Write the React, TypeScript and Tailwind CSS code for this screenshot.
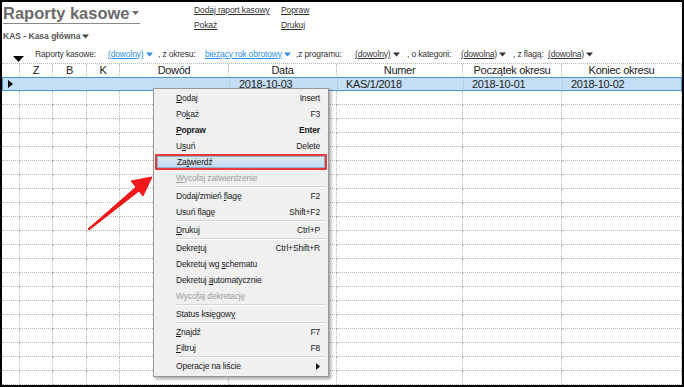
import React from "react"

const cols = [18, 33, 34, 33, 109, 108, 126, 99, 120]
const colTpl = "grid grid-cols-[18px_33px_34px_33px_109px_108px_126px_99px_120px]"

function Tri({ className = "" }: { className?: string }) {
  return (
    <svg width="7" height="5" viewBox="0 0 7 5" className={`inline-block ml-[2px] ${className}`}>
      <path d="M0 0.5 L7 0.5 L3.5 4.5 Z" fill="currentColor" />
    </svg>
  )
}

type Item = {
  label: React.ReactNode
  key?: string
  bold?: boolean
  disabled?: boolean
  active?: boolean
  sub?: boolean
}

const u = (s: string) => <span className="underline underline-offset-[1px]">{s}</span>

const menu: (Item | "sep")[] = [
  { label: <>{u("D")}odaj</>, key: "Insert" },
  { label: <>Po{u("k")}aż</>, key: "F3" },
  { label: <>{u("P")}opraw</>, key: "Enter", bold: true },
  { label: <>U{u("s")}uń</>, key: "Delete" },
  { label: <>Za{u("t")}wierdź</>, active: true },
  { label: <>{u("W")}ycofaj zatwierdzenie</>, disabled: true },
  "sep",
  { label: <>Dodaj/zmień {u("f")}lagę</>, key: "F2" },
  { label: <>Usuń fla{u("g")}ę</>, key: "Shift+F2" },
  "sep",
  { label: <>{u("D")}rukuj</>, key: "Ctrl+P" },
  "sep",
  { label: <>Dekre{u("t")}uj</>, key: "Ctrl+Shift+R" },
  { label: <>Dekretuj wg {u("s")}chematu</> },
  { label: <>Dekretuj {u("a")}utomatycznie</> },
  { label: <>Wyco{u("f")}aj dekretację</>, disabled: true },
  "sep",
  { label: <>Status księgow{u("y")}</> },
  "sep",
  { label: <>{u("Z")}najdź</>, key: "F7" },
  { label: <>{u("F")}iltruj</>, key: "F8" },
  "sep",
  { label: <>Operacje na liście</>, sub: true },
]

function ContextMenu() {
  return (
    <div className="absolute left-[151px] top-[86px] w-[176px] bg-[#f0f0f0] border border-[#979797] pt-[1px] pb-[2px] shadow-[2px_2px_3px_rgba(0,0,0,0.35)] text-[8.5px] tracking-[-0.15px] text-[#1a1a1a]">
      {menu.map((m, i) =>
        m === "sep" ? (
          <div key={i} className="h-[2px] ml-[21px] mr-[2px] border-t border-[#d5d5d5] border-b border-b-white" />
        ) : m.active ? (
          <div key={i} className="h-[16px] mx-[1px] border-2 border-[#e5393b] rounded-[1px]">
            <div className="h-full flex items-center pl-[19px] bg-gradient-to-b from-[#dce9f6] to-[#c3d8ee] border border-[#8fb0d6]">
              {m.label}
            </div>
          </div>
        ) : (
          <div
            key={i}
            className={`h-[16px] flex items-center justify-between pl-[22px] pr-[8px] ${
              m.disabled ? "text-[#9d9d9d]" : ""
            } ${m.bold ? "font-bold" : ""}`}
          >
            <span>{m.label}</span>
            {m.key && <span>{m.key}</span>}
            {m.sub && (
              <svg width="4" height="7" viewBox="0 0 4 7">
                <path d="M0 0 L4 3.5 L0 7 Z" fill="#111" />
              </svg>
            )}
          </div>
        )
      )}
    </div>
  )
}

function Arrow() {
  return (
    <svg
      className="absolute left-[78px] top-[163px]"
      width="80"
      height="72"
      viewBox="0 0 80 72"
    >
      <polygon
        points="8,64 56,22 51,16 72,12 63,31 59,26 9,65"
        fill="#f01818"
        stroke="#f01818"
        strokeWidth="1"
        strokeLinejoin="round"
      />
    </svg>
  )
}

export default function App() {
  const header = ["", "Z", "B", "K", "Dowód", "Data", "Numer", "Początek okresu", "Koniec okresu"]
  const selected = ["", "", "", "", "", "2018-10-03", "KAS/1/2018", "2018-10-01", "2018-10-02"]
  const empty = Array.from({ length: 21 })

  return (
    <div className="relative w-[684px] h-[387px] overflow-hidden border-2 border-black bg-white font-['Liberation_Sans',Arial,sans-serif] text-[#333]">
      {/* top */}
      <div className="h-[43px] flex">
        <div className="w-[192px] pl-[1px] pt-[1px]">
          <div className="w-[137px] h-[21px] border-b border-[#8a8a8a] flex items-end whitespace-nowrap">
            <span className="text-[16.5px] leading-[20px] font-bold text-[#6a6a6a]">Raporty kasowe</span>
            <svg width="8" height="5" viewBox="0 0 8 5" className="ml-[2px] mb-[7px]">
              <path d="M0 0 L7 0 L3.5 4 Z" fill="#6a6a6a" />
            </svg>
          </div>
          <div className="mt-[6px] text-[8.5px] font-bold text-[#555] flex items-center whitespace-nowrap">
            KAS - Kasa główna
            <Tri className="text-[#444]" />
          </div>
        </div>
        <div className="grid grid-cols-[87px_60px] auto-rows-[15px] text-[8.5px] tracking-[-0.1px] text-[#333] underline pt-[1px] whitespace-nowrap">
          <span className="leading-[15px]">Dodaj raport kasowy</span>
          <span className="leading-[15px]">Popraw</span>
          <span className="leading-[15px]">Pokaż</span>
          <span className="leading-[15px]">Drukuj</span>
        </div>
      </div>

      {/* filters */}
      <div className="h-[18px] flex items-center text-[8.5px] tracking-[-0.15px] text-[#333] whitespace-nowrap">
        <div className="w-[33px] pl-[11px] flex items-end h-full pb-[1px]">
          <svg width="11" height="6" viewBox="0 0 11 6">
            <path d="M0 0 L11 0 L5.5 6 Z" fill="#000" />
          </svg>
        </div>
        <span className="w-[73px] shrink-0">Raporty kasowe:</span>
        <span className="w-[50px] shrink-0 text-[#2f8fe8]"><span className="underline">(dowolny)</span><Tri /></span>
        <span className="w-[47px] shrink-0">, z okresu:</span>
        <span className="w-[91px] shrink-0 text-[#2f8fe8]"><span className="underline">bieżący rok obrotowy</span><Tri /></span>
        <span className="w-[59px] shrink-0">,z programu:</span>
        <span className="w-[52px] shrink-0"><span className="underline">(dowolny)</span><Tri /></span>
        <span className="w-[54px] shrink-0">, o kategorii:</span>
        <span className="w-[52px] shrink-0"><span className="underline">(dowolna)</span><Tri /></span>
        <span className="w-[35px] shrink-0">, z flagą:</span>
        <span className="shrink-0"><span className="underline">(dowolna)</span><Tri /></span>
      </div>

      {/* grid */}
      <div className="text-[11px] text-[#222] tracking-[-0.3px]">
        <div className={`${colTpl} h-[14px] border-t border-dotted border-[#b8b8b8]`}>
          {header.map((h, i) => (
            <div key={i} className="border-r border-b border-dotted border-[#b8b8b8] text-center leading-[13px]">
              {h}
            </div>
          ))}
        </div>
        <div className={`${colTpl} h-[14px] bg-[#c4def5] outline outline-1 -outline-offset-1 outline-[#4d95db]`}>
          {selected.map((c, i) => (
            <div
              key={i}
              className={`leading-[14px] ${i > 4 ? "border-l border-dotted border-[#9fb8cf]" : ""} ${
                i === 5 ? "pl-[9px]" : "pl-[8px]"
              }`}
            >
              {i === 0 ? (
                <svg width="5" height="8" viewBox="0 0 5 8" className="mt-[3px] -ml-[2px]">
                  <path d="M0 0 L5 4 L0 8 Z" fill="#000" />
                </svg>
              ) : (
                c
              )}
            </div>
          ))}
        </div>
        {empty.map((_, r) => (
          <div key={r} className={`${colTpl} h-[14px]`}>
            {cols.map((_, i) => (
              <div key={i} className="border-r border-b border-dotted border-[#b8b8b8]" />
            ))}
          </div>
        ))}
      </div>

      <ContextMenu />
      <Arrow />
    </div>
  )
}
